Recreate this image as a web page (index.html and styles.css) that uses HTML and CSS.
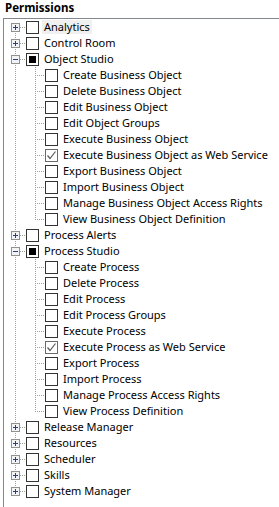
FILE: index.html
```html
<!DOCTYPE html>
<html>
<head>
<meta charset="utf-8">
<link rel="stylesheet" href="styles.css">
</head>
<body>
<div class="title">Permissions</div>
<div class="tree">
  <div class="row"><span class="g0 first"><svg class="exp" width="9" height="9"><rect x="0.5" y="0.5" width="8" height="8" class="eb"/><path d="M2 4.5h5M4.5 2v5" class="es"/></svg></span><span class="cb"></span><span class="lbl hl">Analytics</span></div>
  <div class="row"><span class="g0"><svg class="exp" width="9" height="9"><rect x="0.5" y="0.5" width="8" height="8" class="eb"/><path d="M2 4.5h5M4.5 2v5" class="es"/></svg></span><span class="cb"></span><span class="lbl">Control Room</span></div>
  <div class="row"><span class="g0"><svg class="exp" width="9" height="9"><rect x="0.5" y="0.5" width="8" height="8" class="eb"/><path d="M2 4.5h5" class="es"/></svg></span><span class="cb ind"></span><span class="lbl">Object Studio</span></div>
  <div class="row"><span class="g0 v"></span><span class="g1"></span><span class="cb"></span><span class="lbl">Create Business Object</span></div>
  <div class="row"><span class="g0 v"></span><span class="g1"></span><span class="cb"></span><span class="lbl">Delete Business Object</span></div>
  <div class="row"><span class="g0 v"></span><span class="g1"></span><span class="cb"></span><span class="lbl">Edit Business Object</span></div>
  <div class="row"><span class="g0 v"></span><span class="g1"></span><span class="cb"></span><span class="lbl">Edit Object Groups</span></div>
  <div class="row"><span class="g0 v"></span><span class="g1"></span><span class="cb"></span><span class="lbl">Execute Business Object</span></div>
  <div class="row"><span class="g0 v"></span><span class="g1"></span><span class="cb chk"><svg width="11" height="11"><path d="M1.5 5.5l2.5 3 5.5-7" class="ck"/></svg></span><span class="lbl">Execute Business Object as Web Service</span></div>
  <div class="row"><span class="g0 v"></span><span class="g1"></span><span class="cb"></span><span class="lbl">Export Business Object</span></div>
  <div class="row"><span class="g0 v"></span><span class="g1"></span><span class="cb"></span><span class="lbl">Import Business Object</span></div>
  <div class="row"><span class="g0 v"></span><span class="g1"></span><span class="cb"></span><span class="lbl">Manage Business Object Access Rights</span></div>
  <div class="row"><span class="g0 v"></span><span class="g1 last"></span><span class="cb"></span><span class="lbl">View Business Object Definition</span></div>
  <div class="row"><span class="g0"><svg class="exp" width="9" height="9"><rect x="0.5" y="0.5" width="8" height="8" class="eb"/><path d="M2 4.5h5M4.5 2v5" class="es"/></svg></span><span class="cb"></span><span class="lbl">Process Alerts</span></div>
  <div class="row"><span class="g0"><svg class="exp" width="9" height="9"><rect x="0.5" y="0.5" width="8" height="8" class="eb"/><path d="M2 4.5h5" class="es"/></svg></span><span class="cb ind"></span><span class="lbl">Process Studio</span></div>
  <div class="row"><span class="g0 v"></span><span class="g1"></span><span class="cb"></span><span class="lbl">Create Process</span></div>
  <div class="row"><span class="g0 v"></span><span class="g1"></span><span class="cb"></span><span class="lbl">Delete Process</span></div>
  <div class="row"><span class="g0 v"></span><span class="g1"></span><span class="cb"></span><span class="lbl">Edit Process</span></div>
  <div class="row"><span class="g0 v"></span><span class="g1"></span><span class="cb"></span><span class="lbl">Edit Process Groups</span></div>
  <div class="row"><span class="g0 v"></span><span class="g1"></span><span class="cb"></span><span class="lbl">Execute Process</span></div>
  <div class="row"><span class="g0 v"></span><span class="g1"></span><span class="cb chk"><svg width="11" height="11"><path d="M1.5 5.5l2.5 3 5.5-7" class="ck"/></svg></span><span class="lbl">Execute Process as Web Service</span></div>
  <div class="row"><span class="g0 v"></span><span class="g1"></span><span class="cb"></span><span class="lbl">Export Process</span></div>
  <div class="row"><span class="g0 v"></span><span class="g1"></span><span class="cb"></span><span class="lbl">Import Process</span></div>
  <div class="row"><span class="g0 v"></span><span class="g1"></span><span class="cb"></span><span class="lbl">Manage Process Access Rights</span></div>
  <div class="row"><span class="g0 v"></span><span class="g1 last"></span><span class="cb"></span><span class="lbl">View Process Definition</span></div>
  <div class="row"><span class="g0"><svg class="exp" width="9" height="9"><rect x="0.5" y="0.5" width="8" height="8" class="eb"/><path d="M2 4.5h5M4.5 2v5" class="es"/></svg></span><span class="cb"></span><span class="lbl">Release Manager</span></div>
  <div class="row"><span class="g0"><svg class="exp" width="9" height="9"><rect x="0.5" y="0.5" width="8" height="8" class="eb"/><path d="M2 4.5h5M4.5 2v5" class="es"/></svg></span><span class="cb"></span><span class="lbl">Resources</span></div>
  <div class="row"><span class="g0"><svg class="exp" width="9" height="9"><rect x="0.5" y="0.5" width="8" height="8" class="eb"/><path d="M2 4.5h5M4.5 2v5" class="es"/></svg></span><span class="cb"></span><span class="lbl">Scheduler</span></div>
  <div class="row"><span class="g0"><svg class="exp" width="9" height="9"><rect x="0.5" y="0.5" width="8" height="8" class="eb"/><path d="M2 4.5h5M4.5 2v5" class="es"/></svg></span><span class="cb"></span><span class="lbl">Skills</span></div>
  <div class="row"><span class="g0 end"><svg class="exp" width="9" height="9"><rect x="0.5" y="0.5" width="8" height="8" class="eb"/><path d="M2 4.5h5M4.5 2v5" class="es"/></svg></span><span class="cb"></span><span class="lbl">System Manager</span></div>
</div>
</body>
</html>
```
FILE: styles.css
```css
html, body {
  margin: 0;
  padding: 0;
  height: 100%;
  overflow: hidden;
  background: #fff;
}
body {
  display: flex;
  flex-direction: column;
  font-family: "Noto Sans", "Open Sans", sans-serif;
  font-size: 11px;
  color: #000;
}
.title {
  height: 18px;
  line-height: 16px;
  padding-left: 5px;
  font-weight: bold;
  font-size: 11.5px;
  flex: none;
}
.tree {
  flex: 1;
  margin-left: 3px;
  border-top: 1px solid #828790;
  border-left: 1px solid #828790;
}
.row {
  display: flex;
  align-items: center;
  height: 16px;
  white-space: nowrap;
}
.g0 {
  flex: none;
  width: 22px;
  height: 16px;
  display: flex;
  align-items: center;
  background-image:
    repeating-linear-gradient(to bottom, #a0a0a0 0 1px, transparent 1px 2px),
    repeating-linear-gradient(to right, #a0a0a0 0 1px, transparent 1px 2px);
  background-size: 1px 16px, 6px 1px;
  background-position: 11px 0, 16px 8px;
  background-repeat: no-repeat;
}
.g0.first {
  background-size: 1px 8px, 6px 1px;
  background-position: 11px 8px, 16px 8px;
}
.g0.end {
  background-size: 1px 9px, 6px 1px;
  background-position: 11px 0, 16px 8px;
}
.g0.v {
  background-size: 1px 16px, 0 0;
}
.exp {
  display: block;
  margin-left: 7px;
}
.eb {
  fill: #f4f4f4;
  stroke: #919191;
  stroke-width: 1;
}
.es {
  stroke: #22408c;
  stroke-width: 1;
  fill: none;
}
.g1 {
  flex: none;
  width: 19px;
  height: 16px;
  background-image:
    repeating-linear-gradient(to bottom, #a0a0a0 0 1px, transparent 1px 2px),
    repeating-linear-gradient(to right, #a0a0a0 0 1px, transparent 1px 2px);
  background-size: 1px 16px, 10px 1px;
  background-position: 9px 0, 9px 8px;
  background-repeat: no-repeat;
}
.g1.last {
  background-size: 1px 9px, 10px 1px;
}
.cb {
  flex: none;
  box-sizing: border-box;
  width: 13px;
  height: 13px;
  border: 1px solid #333;
  background: #fff;
  display: flex;
  align-items: center;
  justify-content: center;
}
.cb.ind {
  background: linear-gradient(#000, #000) center / 7px 7px no-repeat, #fff;
}
.cb.chk {
  border-color: #6a6a6a;
}
.cb svg {
  display: block;
}
.ck {
  fill: none;
  stroke: #5a5a5a;
  stroke-width: 1.2;
}
.lbl {
  margin-left: 3px;
  padding: 0 2px;
  height: 14px;
  line-height: 14px;
}
.hl {
  background: #f0f0f0;
}
```
